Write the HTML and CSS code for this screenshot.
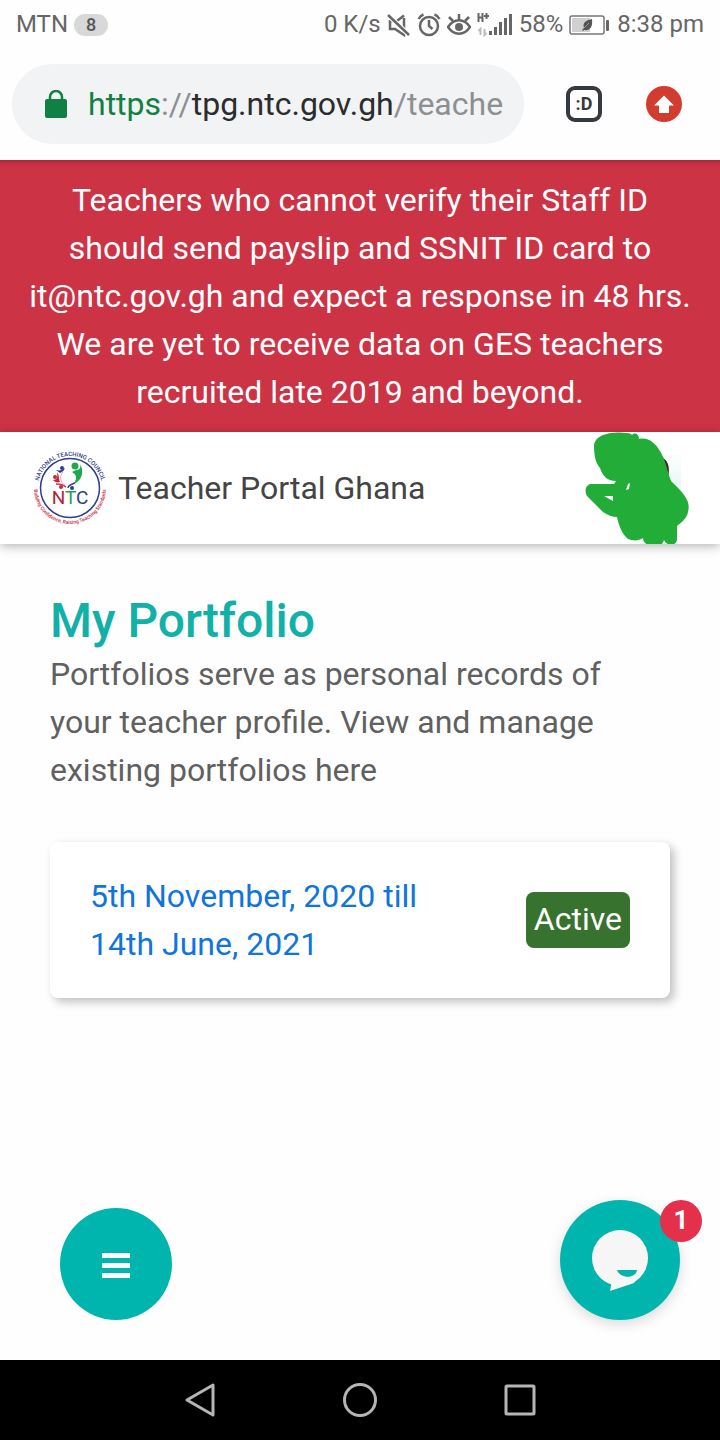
FILE: index.html
```
<!DOCTYPE html>
<html lang="en">
<head>
  <meta charset="UTF-8">
  <meta name="viewport" content="width=device-width, initial-scale=1.0">
  <title>Teacher Portal Ghana</title>
  <link rel="stylesheet" href="styles.css">
</head>
<body>
  <!-- Phone status bar -->
  <div class="status-bar">
    <div class="status-left">
      <span>MTN</span>
      <span class="notif-count">8</span>
    </div>
    <div class="status-right">
      <span>0 K/s</span>
      <svg class="status-icon" viewBox="0 0 24 24" fill="none" stroke="#666" stroke-width="2.500">
        <path d="M17 5v12.500M17 2.500L10 8H3v8h5l9 6v-4.500"/>
        <path d="M1 2l21 20" stroke="#fff" stroke-width="5"/>
        <path d="M1 2l21 20"/>
      </svg>
      <svg class="status-icon" viewBox="0 0 24 24" fill="none" stroke="#666" stroke-width="2.500">
        <circle cx="12" cy="13" r="9"/>
        <path d="M12 7v6l3.500 3M1.500 6C2.500 4 4 2.500 6.500 1.500M22.500 6c-1-2-2.500-3.500-5-4.500"/>
      </svg>
      <svg class="status-icon" viewBox="0 0 24 24" fill="none" stroke="#666" stroke-width="2.500">
        <path d="M1 14c6-9 16-9 22 0-6 9-16 9-22 0z"/>
        <circle cx="12" cy="14" r="4" fill="#666" stroke="none"/>
        <path d="M12 7V1M6 8L2 4M18 8l4-4"/>
      </svg>
      <svg class="signal-icon" viewBox="0 0 36 24">
        <path d="M1.500 0v9M5.500 0v9M1.500 4.500h4M7 3h5M9.500 0v6" fill="none" stroke="#666" stroke-width="2"/>
        <path d="M3.500 22v-6l-2 2M7.500 16v6l2-2" fill="none" stroke="#bbb" stroke-width="2"/>
        <path d="M12 18h3v4h-3zM17 14h3v8h-3zM22 9h3v13h-3zM27 5h3v17h-3zM32 1h3v21h-3z" fill="#666"/>
      </svg>
      <span>58%</span>
      <svg class="battery-icon" viewBox="0 0 42 20">
        <rect x="1" y="1" width="34" height="18" rx="2" fill="#fff" stroke="#777" stroke-width="1.500"/>
        <rect x="3" y="3" width="18" height="14" fill="#d0d0d0"/>
        <path d="M23 4c1 8-2 12-8 11l-1 1-1-1 2-2c-2-6 3-8 8-9z" fill="#555"/>
        <path d="M15 13l5-5" stroke="#999"/>
        <rect x="37" y="5" width="3" height="11" rx="1" fill="#666"/>
      </svg>
      <span>8:38 pm</span>
    </div>
  </div>

  <!-- Browser toolbar -->
  <div class="toolbar">
    <a class="address" href="#">
      <svg class="lock-icon" viewBox="0 0 22 28">
        <path d="M5 11V7a6 6 0 0 1 12 0v4" fill="none" stroke="#108043" stroke-width="2.500"/>
        <rect x="0" y="9" width="22" height="19" rx="2" fill="#108043"/>
      </svg>
      <span class="url"><span class="scheme">https</span><span class="muted">://</span>tpg.ntc.gov.gh<span class="muted">/teache</span></span>
    </a>
    <div class="toolbar-buttons">
      <button class="tabs-btn" aria-label="Open tabs">:D</button>
      <button class="update-btn" aria-label="Update available">
        <svg viewBox="0 0 36 36">
          <path d="M18 9.500L28 19.500h-5V27H13v-7.500H8z" fill="#fff"/>
        </svg>
      </button>
    </div>
  </div>

  <div class="alert">
    Teachers who cannot verify their Staff ID should send payslip and SSNIT ID card to it@ntc.gov.gh and expect a response in 48 hrs. We are yet to receive data on GES teachers recruited late 2019 and beyond.
  </div>

  <header>
    <a class="brand" href="#">
      <svg class="logo" viewBox="0 0 76 76">
        <defs>
          <path id="arc-top" d="M6 38a32 32 0 0 1 64 0"/>
          <path id="arc-bottom" d="M2 38a36 36 0 0 0 72 0"/>
        </defs>
        <circle cx="38" cy="38" r="29.500" fill="#fff" stroke="#2e3e8c" stroke-width="1.500"/>
        <text class="ring ring-top"><textPath href="#arc-top" startOffset="50%">NATIONAL TEACHING COUNCIL</textPath></text>
        <text class="ring ring-bottom"><textPath href="#arc-bottom" startOffset="50%">Building Confidence, Raising Teaching Standards</textPath></text>
        <!-- ring of people -->
        <circle cx="43" cy="16" r="3.500" fill="#22a652"/>
        <path d="M44 20c4 0 5-3 4-6 4 6 3 16-6 20 3-6 3-9-2-12z" fill="#22a652"/>
        <circle cx="30" cy="18" r="2" fill="#2e3e8c"/>
        <path d="M24 20c4 1 6 0 9-2-1 3-3 4-5 5z" fill="#2e3e8c"/>
        <circle cx="23" cy="27" r="2" fill="#c9283c"/>
        <path d="M21 30c4 0 5-3 4-8 3 4 1 6 3 10-3 1-5 0-7-2z" fill="#c9283c"/>
        <circle cx="29" cy="37" r="2" fill="#c9283c"/>
        <path d="M24 34c4 0 6 0 10 3" fill="none" stroke="#c9283c" stroke-width="1.500"/>
        <circle cx="40" cy="38" r="2" fill="#2e3e8c"/>
        <path d="M36 38c0-3 4-4 7-5" fill="none" stroke="#2e3e8c" stroke-width="1.500"/>
        <path d="M31 22c-4 4-3 10 2 13" fill="none" stroke="#e3a6b6"/>
        <text class="ntc" x="38" y="54"><tspan fill="#b5243a">N</tspan><tspan fill="#22a652">T</tspan><tspan fill="#2e3e8c">C</tspan></text>
      </svg>
      <span>Teacher Portal Ghana</span>
    </a>
    <button class="avatar" aria-label="Profile">
      <svg viewBox="0 0 108 112">
        <defs>
          <linearGradient id="photo" x1="0" y1="0" x2="0" y2="1">
            <stop offset="0" stop-color="#fdfefe"/>
            <stop offset="1" stop-color="#def3f6"/>
          </linearGradient>
        </defs>
        <rect x="60" y="22" width="39" height="50" fill="url(#photo)"/>
        <path d="M81 26c6 3 7 12 5 19l3 4-7-2z" fill="#442826"/>
        <path d="M12 13C13 7 17 5 21 3c7-3 17-3 24-2 3 0 4 1 5 2 3-3 7-1 7 4 5-1 9 0 12 2 6 4 10 11 13 18 3 8 4 15 7 22 6 6 13 12 16 19 2 4 2 8 1 12-1 6-6 10-11 14v13c0 7-10 8-13 1-2 7-7 6-11 5-5 1-10-2-10-7-4 3-10 3-15 1-5-4-9-12-11-22-4 0-10-2-14-5L5 64c-3-6-1-11 4-12h23l2-3c-8 0-13-4-16-13-5-6-6-14-6-23zM22 64l9 5v-5zM46 52l-2 6 3-1 1-6z" fill="#22ac38" fill-rule="evenodd"/>
      </svg>
    </button>
  </header>

  <main>
    <h1>My Portfolio</h1>
    <p class="intro">Portfolios serve as personal records of your teacher profile. View and manage existing portfolios here</p>

    <div class="portfolio-card">
      <a href="#">5th November, 2020 till 14th June, 2021</a>
      <span class="badge">Active</span>
    </div>

    <div class="floating-row">
      <button class="menu-btn" aria-label="Menu">
        <svg viewBox="0 0 28 26">
          <path d="M0 0h28v5H0zM0 10h28v5H0zM0 20h28v5H0z" fill="#fff"/>
        </svg>
      </button>
      <button class="chat-btn" aria-label="Chat">
        <svg viewBox="0 0 56 61">
          <circle cx="28" cy="28" r="28" fill="#f7f6f6"/>
          <path d="M20 50l-2 11 24-8 8-13z" fill="#f7f6f6"/>
          <path d="M25 40h20c-1 9-17 9-20 0z" fill="#00b5ad"/>
        </svg>
        <span class="chat-count">1</span>
      </button>
    </div>
  </main>

  <!-- Android navigation -->
  <nav class="system-nav">
    <button aria-label="Back">
      <svg viewBox="0 0 36 36"><path d="M31 3v30L5 18z"/></svg>
    </button>
    <button aria-label="Home">
      <svg viewBox="0 0 36 36"><circle cx="18" cy="18" r="15.500"/></svg>
    </button>
    <button aria-label="Recent apps">
      <svg viewBox="0 0 36 36"><rect x="4" y="4" width="28" height="28" rx="1"/></svg>
    </button>
  </nav>
</body>
</html>
```
FILE: styles.css
```
:root {
  --main-color: #00b5ad;
  --alert-color: #cc3345;
  --link-color: #0f75dc;
  --active-color: #37722f;
  --badge-red: #e5304b;
  --status-color: #666;
}

* {
  box-sizing: border-box;
}

body {
  margin: 0;
  min-height: 100vh;
  display: flex;
  flex-direction: column;
  background: #fefefe;
  color: #606060;
  font-family: Roboto, sans-serif;
  font-size: 32px;
  line-height: 48px;
}

a {
  text-decoration: none;
}

button {
  padding: 0;
  border: none;
  background: none;
  font-family: inherit;
  cursor: pointer;
}

svg {
  display: block;
}

/* status bar */
.status-bar {
  display: flex;
  justify-content: space-between;
  padding: 1px 16px 0;
  color: var(--status-color);
  font-size: 24px;
  line-height: 47px;
}

.status-left,
.status-right {
  display: flex;
  align-items: center;
  gap: 6px;
}

.notif-count {
  width: 34px;
  height: 22px;
  border-radius: 11px;
  background: #d8d8d8;
  color: #555;
  font-size: 18px;
  font-weight: 500;
  line-height: 22px;
  text-align: center;
}

.status-icon {
  width: 24px;
  height: 24px;
}

.signal-icon {
  width: 36px;
  height: 24px;
}

.battery-icon {
  width: 42px;
  height: 20px;
}

/* browser toolbar */
.toolbar {
  display: flex;
  align-items: center;
  justify-content: space-between;
  padding: 16px 38px 16px 12px;
}

.address {
  flex: 1;
  display: flex;
  align-items: center;
  gap: 21px;
  height: 80px;
  padding: 0 20px 0 33px;
  border-radius: 40px;
  background: #f1f3f4;
  overflow: hidden;
}

.lock-icon {
  flex: none;
  width: 22px;
  height: 28px;
}

.url {
  color: #2b2c2e;
  white-space: nowrap;
}

.scheme {
  color: #108043;
}

.muted {
  color: #8d8f91;
}

.toolbar-buttons {
  display: flex;
  gap: 44px;
  margin-left: 42px;
}

.tabs-btn {
  width: 36px;
  height: 36px;
  border: 4px solid #36393d;
  border-radius: 9px;
  color: #36393d;
  font-size: 18px;
  font-weight: bold;
  line-height: 26px;
}

.update-btn {
  width: 36px;
  height: 36px;
  border-radius: 50%;
  background: #d23c2e;
}

/* page */
.alert {
  padding: 16px 24px;
  background: var(--alert-color);
  box-shadow: inset 0 8px 6px -8px rgba(0, 0, 0, 0.4);
  color: #fff;
  text-align: center;
}

header {
  display: flex;
  align-items: center;
  justify-content: space-between;
  height: 112px;
  padding: 0 30px 0 32px;
  background: #fff;
  box-shadow: 0 2px 10px rgba(0, 0, 0, 0.3);
}

.brand {
  display: flex;
  align-items: center;
  gap: 10px;
  color: #444;
}

.logo {
  width: 76px;
  height: 76px;
}

.ring {
  font-weight: 500;
  text-anchor: middle;
}

.ring-top {
  fill: #2e3e8c;
  font-size: 6px;
}

.ring-bottom {
  fill: #c9283c;
  font-size: 5px;
}

.ntc {
  font-size: 19px;
  text-anchor: middle;
}

.avatar svg {
  width: 108px;
  height: 112px;
}

main {
  flex: 1;
  display: flex;
  flex-direction: column;
  padding: 48px 50px 40px;
}

h1 {
  margin: 0;
  color: #11b0a8;
  font-size: 48px;
  font-weight: 500;
  line-height: 58px;
}

.intro {
  margin: 0 0 48px;
}

.portfolio-card {
  display: flex;
  align-items: center;
  justify-content: space-between;
  gap: 80px;
  padding: 30px 40px;
  border-radius: 8px;
  background: #fff;
  box-shadow: 4px 4px 10px rgba(0, 0, 0, 0.25);
}

.portfolio-card a {
  color: var(--link-color);
}

.badge {
  padding: 0 8px 2px;
  border-radius: 8px;
  background: var(--active-color);
  color: #fff;
  line-height: 54px;
}

.floating-row {
  display: flex;
  align-items: flex-end;
  justify-content: space-between;
  margin: auto -10px 0 10px;
}

.menu-btn,
.chat-btn {
  display: flex;
  align-items: center;
  justify-content: center;
  border-radius: 50%;
  background: var(--main-color);
}

.menu-btn {
  width: 112px;
  height: 112px;
  padding-top: 4px;
}

.menu-btn svg {
  width: 28px;
  height: 26px;
}

.chat-btn {
  position: relative;
  width: 120px;
  height: 120px;
  box-shadow: 0 4px 14px rgba(0, 0, 0, 0.15);
}

.chat-btn svg {
  width: 56px;
  height: 61px;
}

.chat-count {
  position: absolute;
  top: 0;
  right: -22px;
  width: 42px;
  height: 42px;
  border-radius: 50%;
  background: var(--badge-red);
  color: #fff;
  font-size: 26px;
  font-weight: bold;
  line-height: 40px;
}

.system-nav {
  display: flex;
  justify-content: center;
  align-items: center;
  gap: 124px;
  height: 80px;
  background: #000;
}

.system-nav svg {
  width: 36px;
  height: 36px;
  fill: none;
  stroke: #b5b5b5;
  stroke-width: 3;
  stroke-linejoin: round;
}
```
